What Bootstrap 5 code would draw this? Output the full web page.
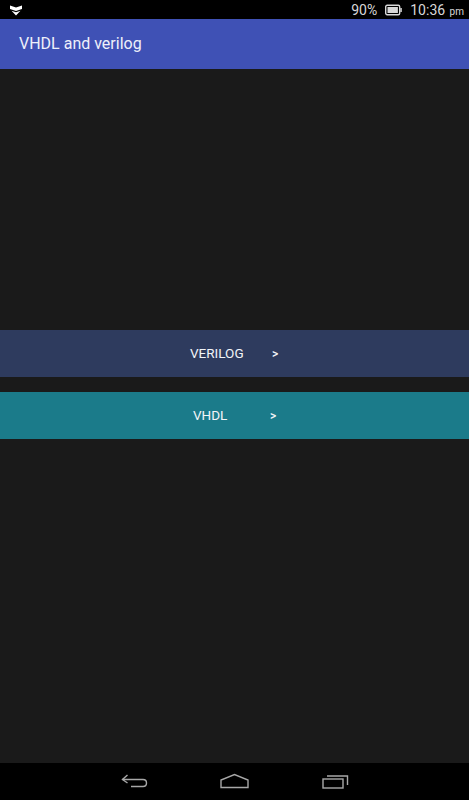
<!DOCTYPE html>
<html lang="en">
<head>
    <meta charset="UTF-8">
    <meta name="viewport" content="width=device-width, initial-scale=1.0">
    <title>VHDL and verilog</title>
    <link href="https://cdn.jsdelivr.net/npm/bootstrap@5.3.0/dist/css/bootstrap.min.css" rel="stylesheet">
    <style>
        body {
            background-color: #1a1a1a;
            font-family: Roboto, "Liberation Sans", sans-serif;
            color: #fff;
        }
        .screen { height: 800px; width: 469px; overflow: hidden; }
        .status-bar { height: 19px; background-color: #000; color: #d8d8d8; font-size: 14px; padding: 0 5px 0 9px; }
        .status-bar .pm { font-size: 10px; margin-left: 2px; }
        .status-right { line-height: 1; padding-top: 1px; }
        .app-bar { height: 50px; background-color: #3f51b5; font-size: 16px; padding-left: 19px; padding-bottom: 1px; color: #eef0fa; }
        .content { height: 694px; padding-top: 261px; background-color: #1a1a1a; }
        .lang-btn { height: 47px; font-size: 13.5px; color: #f2f5f8; }
        .lang-verilog { background-color: #2e3b5e; margin-bottom: 15px; padding-left: 190px; }
        .lang-vhdl { background-color: #1b7b8a; padding-left: 193px; }
        .lang-verilog .lang-name { width: 82px; }
        .lang-vhdl .lang-name { width: 77px; }
        .lang-arrow { font-size: 12px; font-weight: 500; }
        .nav-bar { height: 37px; background-color: #000; }
        .nav-bar svg { position: absolute; top: 10px; }
        .nav-bar { position: relative; }
    </style>
</head>
<body>
    <div class="screen d-flex flex-column">
        <div class="status-bar d-flex justify-content-between align-items-center">
            <svg width="14" height="12" viewBox="0 0 14 12">
                <path d="M1 1.5 L7 3.5 L13 1.5 L13 5 L7 7 L1 5 Z M2.5 6.8 L7 8.3 L11.5 6.8 L7 11.5 Z" fill="#fff"/>
            </svg>
            <div class="status-right d-flex align-items-center gap-1">
                <span>90%</span>
                <svg class="mx-1" width="17" height="12" viewBox="0 0 17 12">
                    <rect x="0.7" y="1.2" width="14" height="9.6" rx="1.5" fill="none" stroke="#d8d8d8" stroke-width="1.4"/>
                    <rect x="2.5" y="3" width="10.4" height="6" fill="#d8d8d8"/>
                    <rect x="15.3" y="4" width="1.5" height="4" fill="#d8d8d8"/>
                </svg>
                <span>10:36<span class="pm"> pm</span></span>
            </div>
        </div>
        <div class="app-bar d-flex align-items-center">VHDL and verilog</div>
        <div class="content">
            <div class="lang-btn lang-verilog d-flex align-items-center">
                <span class="lang-name">VERILOG</span><span class="lang-arrow">&gt;</span>
            </div>
            <div class="lang-btn lang-vhdl d-flex align-items-center">
                <span class="lang-name">VHDL</span><span class="lang-arrow">&gt;</span>
            </div>
        </div>
        <div class="nav-bar">
            <svg style="left:121px" width="27" height="16" viewBox="0 0 27 16" fill="none" stroke="#a8a8a8" stroke-width="1.4">
                <path d="M1.5 6.5 H22 Q25.5 6.5 25.5 10 Q25.5 13.5 22 13.5 H10"/>
                <path d="M6.5 2 L1.5 6.5 L6.5 10"/>
            </svg>
            <svg style="left:220px" width="29" height="16" viewBox="0 0 29 16" fill="none" stroke="#a8a8a8" stroke-width="1.4">
                <path d="M1 14.5 V7 L14.500 1.500 L28 7 V14.500 Z"/>
            </svg>
            <svg style="left:322px" width="27" height="16" viewBox="0 0 27 16" fill="none" stroke="#a8a8a8" stroke-width="1.4">
                <rect x="1" y="6" width="20" height="9"/>
                <path d="M5 3 H25.500 V12"/>
            </svg>
        </div>
    </div>
    <script src="https://cdn.jsdelivr.net/npm/bootstrap@5.3.0/dist/js/bootstrap.bundle.min.js"></script>
</body>
</html>
